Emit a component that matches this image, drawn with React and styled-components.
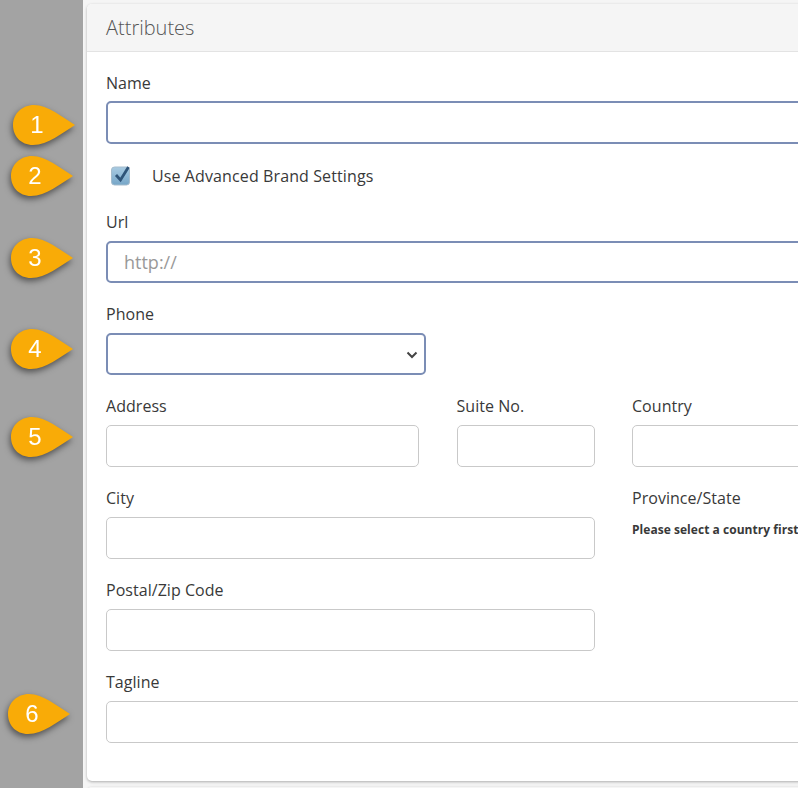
import React from "react";
import styled, { createGlobalStyle } from "styled-components";

const GlobalStyle = createGlobalStyle`
  html, body {
    margin: 0;
    height: 100%;
    overflow: hidden;
    background: #f5f5f5;
  }
  * {
    box-sizing: border-box;
  }
`;

const Page = styled.div`
  position: relative;
  display: flex;
  width: 798px;
  height: 788px;
  overflow: hidden;
  font-family: "Open Sans", sans-serif;
  color: #393939;
`;

const Gutter = styled.div`
  flex: 0 0 83px;
  background: #a3a3a3;
`;

const Content = styled.div`
  flex: 0 0 auto;
  width: 800px;
  padding: 4px 0 0 4px;
`;

const Card = styled.section`
  background: #fff;
  border-radius: 5px;
  box-shadow: 0 1px 3px rgba(0, 0, 0, 0.3);
  margin-bottom: 6px;
`;

const CardHeader = styled.h3`
  margin: 0;
  height: 48px;
  padding: 0 19px;
  display: flex;
  align-items: center;
  background: #f5f5f5;
  border-bottom: 1px solid #e3e3e3;
  border-radius: 5px 5px 0 0;
  font-size: 20px;
  font-weight: 300;
  color: #555;
`;

const CardBody = styled.div`
  padding: 19px 19px 38px;
  display: flex;
  flex-direction: column;
  gap: 19px;
`;

const Row = styled.div`
  display: grid;
  grid-template-columns: ${(p) => p.$columns || "1fr"};
  column-gap: ${(p) => p.$gap || 38}px;
`;

const Field = styled.div`
  display: flex;
  flex-direction: column;
  gap: ${(p) => p.$gap || 7}px;
`;

const Label = styled.label`
  font-size: 16px;
  line-height: 24px;
  letter-spacing: 0.04px;
`;

const Input = styled.input`
  width: 100%;
  height: ${(p) => p.$height || 42}px;
  padding: 0 16px;
  border: ${(p) => (p.$active ? "2px solid #7b8db5" : "1px solid #c9c9c9")};
  border-radius: 5px;
  background: #fff;
  font-family: inherit;
  font-size: 18px;
  color: #393939;
  outline: none;

  &::placeholder {
    color: #999;
  }
`;

const SelectBox = styled.div`
  position: relative;
  width: 320px;
  height: 42px;
  border: 2px solid #7b8db5;
  border-radius: 5px;
  background: #fff;
`;

const Chevron = styled.svg`
  position: absolute;
  right: 6px;
  top: 16px;
  width: 12px;
  height: 8px;
`;

const CheckRow = styled.div`
  display: flex;
  align-items: center;
  gap: 21px;
  height: 24px;
  padding-left: 5px;
  font-size: 16px;
  letter-spacing: 0.11px;
  margin: 1px 0 3px;
`;

const CheckIcon = styled.svg`
  width: 20px;
  height: 20px;
  flex: none;
`;

const Hint = styled.div`
  font-size: 12px;
  font-weight: 700;
  line-height: 24px;
  letter-spacing: 0.04px;
  margin-top: 8px;
  white-space: nowrap;
`;

const Pin = styled.div`
  position: absolute;
  left: ${(p) => p.$x}px;
  top: ${(p) => p.$y}px;
  width: 62px;
  height: 40px;
  filter: drop-shadow(-1px 3px 3px rgba(0, 0, 0, 0.5));
`;

const PinShape = styled.svg`
  position: absolute;
  inset: 0;
  width: 62px;
  height: 40px;
`;

const PinNumber = styled.span`
  position: absolute;
  left: 0;
  top: 0;
  width: 48px;
  height: 40px;
  line-height: 40px;
  text-align: center;
  font-family: "Liberation Sans", sans-serif;
  font-size: 24px;
  color: #fff;
`;

const pins = [
  { n: 1, x: 13, y: 105 },
  { n: 2, x: 11, y: 156 },
  { n: 3, x: 11, y: 238 },
  { n: 4, x: 11, y: 329 },
  { n: 5, x: 11, y: 417 },
  { n: 6, x: 8, y: 694 },
];

export default function App() {
  return (
    <Page>
      <GlobalStyle />
      <Gutter />
      <Content>
        <Card>
          <CardHeader>Attributes</CardHeader>
          <CardBody>
            <Field $gap={6}>
              <Label>Name</Label>
              <Input $active $height={43} />
            </Field>
            <CheckRow>
              <CheckIcon viewBox="0 0 20 20">
                <defs>
                  <linearGradient id="boxFill" x1="0" y1="0" x2="0" y2="1">
                    <stop offset="0" stopColor="#a9cbe2" />
                    <stop offset="1" stopColor="#76a6c8" />
                  </linearGradient>
                </defs>
                <rect x="0.5" y="1" width="18" height="18" rx="3" fill="url(#boxFill)" stroke="#a5bccd" />
                <path d="M5 9l4.5 5L17.5 1" fill="none" stroke="#2f5478" strokeWidth="2.8" />
              </CheckIcon>
              Use Advanced Brand Settings
            </CheckRow>
            <Field>
              <Label>Url</Label>
              <Input $active placeholder="http://" />
            </Field>
            <Field>
              <Label>Phone</Label>
              <SelectBox>
                <Chevron viewBox="0 0 12 8">
                  <path d="M1.5 1.5L6 6l4.5-4.5" fill="none" stroke="#444" strokeWidth="2" />
                </Chevron>
              </SelectBox>
            </Field>
            <Row $columns="313px 138px 1fr" $gap={37.5}>
              <Field>
                <Label>Address</Label>
                <Input />
              </Field>
              <Field>
                <Label>Suite No.</Label>
                <Input />
              </Field>
              <Field>
                <Label>Country</Label>
                <Input />
              </Field>
            </Row>
            <Row $columns="489px 1fr" $gap={37}>
              <Field>
                <Label>City</Label>
                <Input />
              </Field>
              <div>
                <Label>Province/State</Label>
                <Hint>Please select a country first</Hint>
              </div>
            </Row>
            <Row $columns="489px 1fr" $gap={37}>
              <Field>
                <Label>Postal/Zip Code</Label>
                <Input />
              </Field>
            </Row>
            <Field>
              <Label>Tagline</Label>
              <Input />
            </Field>
          </CardBody>
        </Card>
        <Card>
          <CardHeader />
        </Card>
      </Content>
      {pins.map((pin) => (
        <Pin key={pin.n} $x={pin.x} $y={pin.y}>
          <PinShape viewBox="0 0 62 40">
            <path
              d="M21 0C35 0 49 12 62 20C49 28 35 40 20 40C8 40 0 31 0 20C0 9 9 0 21 0Z"
              fill="#f9ab07"
            />
          </PinShape>
          <PinNumber>{pin.n}</PinNumber>
        </Pin>
      ))}
    </Page>
  );
}
